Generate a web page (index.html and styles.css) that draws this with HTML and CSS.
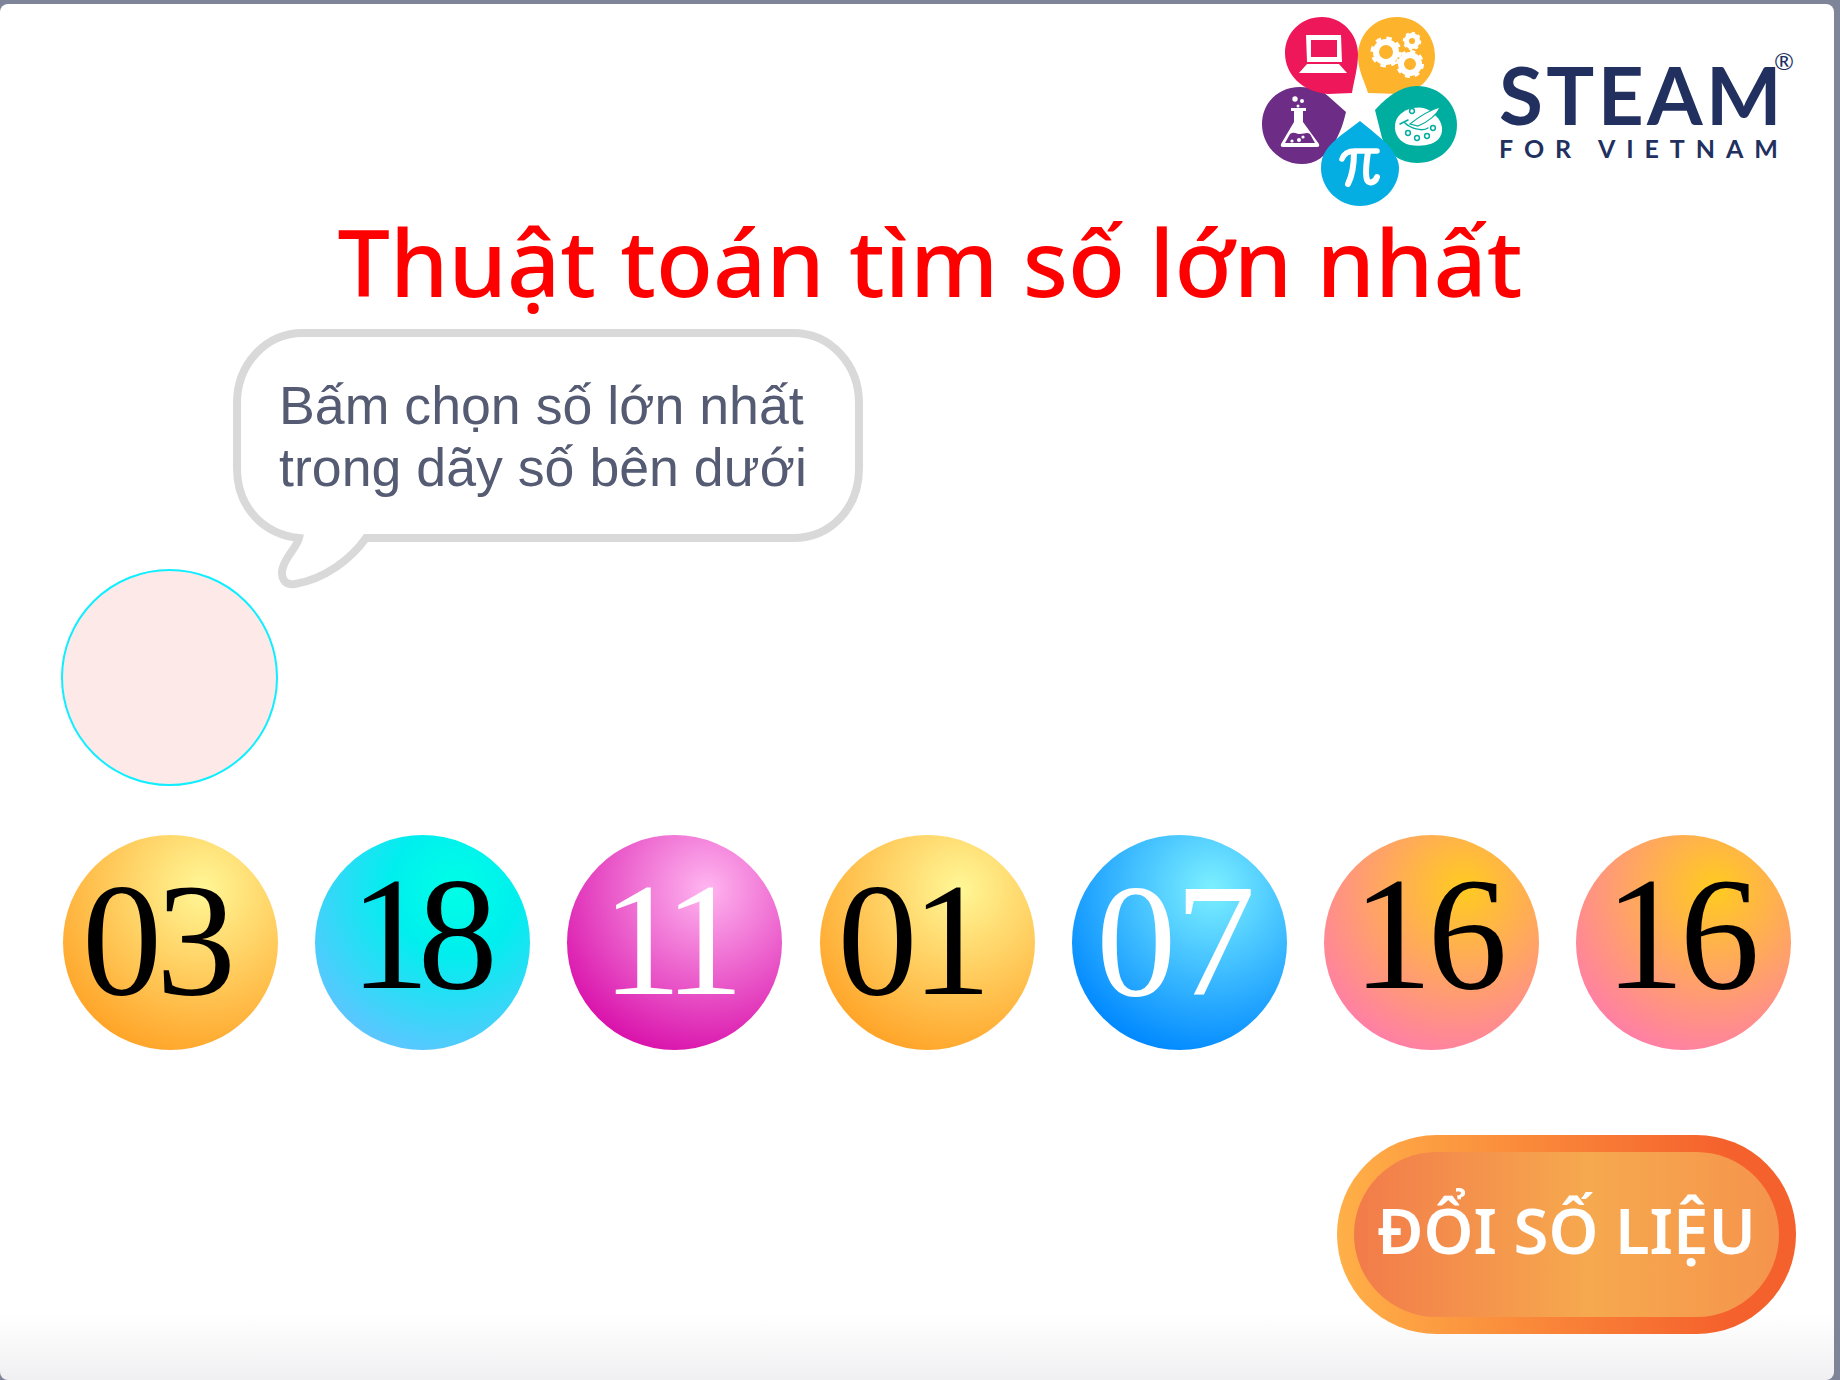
FILE: index.html
```html
<!doctype html>
<html lang="vi">
<head>
    <meta charset="UTF-8">
    <title>Thuật toán tìm số lớn nhất</title>
    <link rel="stylesheet" href="styles.css">
</head>
<body>
<div class="screen">
    <header class="brand">
        <svg class="brand-mark" viewBox="0 0 220 200" width="220" height="200" aria-hidden="true">
            <!-- petals -->
            <path fill="#6d2c85" d="M50 77C62 77 72 80 78 86L96 102C93 115 90 122 86 130C76 147 65 154 52 154C30 154 12 136 12 114C12 93 28 77 50 77Z"/>
            <path fill="#ee1759" d="M72 7C92 7 108 24 108 44C108 58 104 70 102 83L78 84C52 82 35 64 35 43C35 23 51 7 72 7Z"/>
            <path fill="#fdb32b" d="M147 7C168 7 185 24 185 46C185 66 170 82 150 84L118 83C114 70 108 60 108 46C108 24 125 7 147 7Z"/>
            <path fill="#00ae9f" d="M167 76C189 76 207 93 207 115C207 137 189 153 167 153C150 153 138 144 132 128L125 100C136 88 150 76 167 76Z"/>
            <path fill="#04ade2" d="M110 111C118 118 135 130 142 140C147 148 149 152 149 158C149 179 131 196 110 196C89 196 71 179 71 158C71 144 78 136 90 126Z"/>

            <!-- laptop -->
            <path fill="#fff" fill-rule="evenodd" d="M56 25H91L92 52H57ZM61 30V47H87V30Z"/>
            <path fill="#fff" d="M57 54H89L97 63H49Z"/>
            <!-- gears -->
            <g class="gear">
                <circle cx="136" cy="42" r="10" stroke-width="6"/>
                <circle cx="136" cy="42" r="13.5" stroke-width="4" stroke-dasharray="5.3 5.3"/>
                <circle cx="162" cy="31" r="5.5" stroke-width="5"/>
                <circle cx="162" cy="31" r="8" stroke-width="2.5" stroke-dasharray="3.1 3.1"/>
                <circle cx="160" cy="54" r="9" stroke-width="6"/>
                <circle cx="160" cy="54" r="12.5" stroke-width="3" stroke-dasharray="4.9 4.9"/>
            </g>
            <!-- flask -->
            <circle cx="45" cy="89" r="2.7" fill="#fff"/>
            <circle cx="52" cy="91" r="2" fill="#fff"/>
            <circle cx="48" cy="96" r="1.5" fill="#fff"/>
            <path fill="#fff" d="M41 98H56V101H53V112L69 134Q70 137 67 137H33Q30 137 31 134L44 112V101H41Z"/>
            <path fill="#6d2c85" d="M40 124C44 121 47 124 50 124C54 124 57 122 60 124L65 133H35Z"/>
            <circle cx="42" cy="131" r="1.6" fill="#fff"/>
            <circle cx="49" cy="130" r="2" fill="#fff"/>
            <circle cx="53" cy="127" r="1.6" fill="#fff"/>
            <!-- palette -->
            <path fill="#fff" d="M163 98C175 96 180 100 186 106C192 112 194 120 190 127C185 135 172 137 160 135C150 133 144 124 145 115C146 106 153 100 163 98Z"/>
            <path fill="#fff" stroke="#00ae9f" stroke-width="1.2" d="M160 114C170 106 180 100 190 97C188 104 178 112 168 116Z"/>
            <path fill="none" stroke="#00ae9f" stroke-width="1.5" stroke-linecap="round" d="M155 113C160 118 172 122 178 118M150 114L158 110"/>
            <g fill="none" stroke="#00ae9f" stroke-width="1.5">
                <circle cx="162" cy="101" r="2.4"/>
                <circle cx="158" cy="123" r="2.4"/>
                <circle cx="167" cy="128" r="2.4"/>
                <circle cx="177" cy="126" r="2.4"/>
                <circle cx="183" cy="118" r="2.4"/>
            </g>
            <!-- pi -->
            <path fill="none" stroke="#fff" stroke-width="5.5" stroke-linecap="round" d="M92 149C94 143 99 141 105 141H127"/>
            <path fill="none" stroke="#fff" stroke-width="6" stroke-linecap="round" d="M104 142C104 155 102 166 98 174"/>
            <path fill="none" stroke="#fff" stroke-width="6" stroke-linecap="round" d="M118 142C116 155 115 164 117 170C119 174 125 173 127 167"/>
        </svg>
        <div class="brand-name">
            <div class="brand-steam">STEAM<span class="brand-reg">®</span></div>
            <div class="brand-sub">FOR VIETNAM</div>
        </div>
    </header>

    <h1 class="title">Thuật toán tìm số lớn nhất</h1>

    <div class="bubble">
        <svg class="bubble-shape" viewBox="0 0 630 260" width="630" height="260" aria-hidden="true">
            <path fill="#fff" stroke="#d9d9d9" stroke-width="8" d="M70 4H560C598 4 626 36 626 74V139C626 179 598 209 560 209H133C118 230 92 250 62 255C51 257 47 248 50 238C54 226 64 218 66 209C30 205 4 178 4 139V74C4 36 32 4 70 4Z"/>
        </svg>
        <p class="bubble-text">Bấm chọn số lớn nhất<br>trong dãy số bên dưới</p>
    </div>

    <div class="slot"></div>

    <div class="balls">
        <div class="ball ball-yellow num-03">03</div>
        <div class="ball ball-cyan num-18">18</div>
        <div class="ball ball-pink num-11">11</div>
        <div class="ball ball-yellow num-01">01</div>
        <div class="ball ball-blue num-07">07</div>
        <div class="ball ball-coral num-16">16</div>
        <div class="ball ball-coral num-16">16</div>
    </div>

    <button class="change-btn" type="button">ĐỔI SỐ LIỆU</button>
</div>
</body>
</html>
```

FILE: styles.css
```css
* {
    box-sizing: border-box;
}

body {
    margin: 0;
    background-color: #7f8599;
}

.screen {
    height: 1376px;
    width: 1834px;
    margin-top: 4px;
    position: relative;
    display: flex;
    flex-direction: column;
    border-radius: 8px;
    background: linear-gradient(to bottom, #fff 1310px, #f0f0f2 100%);
    overflow: hidden;
}

.brand {
    height: 202px;
    padding: 6px 45px 0 0;
    display: flex;
    justify-content: flex-end;
    gap: 29px;
}

.brand-mark {
    flex: none;
}

.gear circle {
    fill: none;
    stroke: #fff;
}

.brand-name {
    padding-top: 51px;
    width: 290px;
    color: #22305f;
    font-family: Lato, sans-serif;
}

.brand-steam {
    display: flex;
    font-size: 80px;
    line-height: 66px;
    font-weight: 700;
    letter-spacing: 3.4px;
    white-space: nowrap;
}

.brand-reg {
    margin: -13px 0 0 -11px;
    font-size: 24px;
    line-height: 26px;
    font-weight: 400;
    letter-spacing: 0;
}

.brand-sub {
    margin-top: 8px;
    font-size: 25px;
    line-height: 26px;
    font-weight: 700;
    letter-spacing: 10.9px;
    white-space: nowrap;
}

.title {
    margin: 0;
    padding-left: 26px;
    text-align: center;
    color: #ff0000;
    font-family: "Noto Sans", sans-serif;
    font-size: 93.3px;
    line-height: 110px;
    font-weight: 500;
}

.bubble {
    margin: 13px 0 0 233px;
    width: 630px;
    height: 213px;
    position: relative;
}

.bubble-shape {
    position: absolute;
    left: 0;
    top: 0;
}

.bubble-text {
    margin: 0;
    padding: 45px 0 0 46px;
    position: relative;
    color: #555b73;
    font-family: "Liberation Sans", Arial, sans-serif;
    font-size: 53.7px;
    line-height: 62px;
    white-space: nowrap;
}

.slot {
    margin: 27px 0 0 61px;
    width: 217px;
    height: 217px;
    border: 2.5px solid #10eeff;
    border-radius: 50%;
    background-color: #fdeae8;
}

.balls {
    margin-top: 49px;
    padding-left: 63px;
    display: flex;
    gap: 37.2px;
}

.ball {
    width: 215px;
    height: 215px;
    flex: none;
    border-radius: 50%;
    display: flex;
    align-items: center;
    justify-content: center;
    color: #000;
    font-family: "Liberation Serif", "Times New Roman", serif;
    font-size: 160px;
    line-height: 1;
}

/* the digits do not sit quite centred in their balls */
.num-03 {
    padding: 0 29px 6px 0;
    letter-spacing: -6px;
}

.num-18 {
    padding: 0 10px 17px 0;
    letter-spacing: -12px;
}

.num-11 {
    padding: 0 16px 6px 0;
    letter-spacing: -12px;
}

.num-01 {
    padding: 0 31px 6px 0;
    letter-spacing: -6px;
}

.num-07 {
    padding: 0 8px 4px 0;
    letter-spacing: -1px;
}

.num-16 {
    padding: 0 8px 17px 0;
    letter-spacing: -5px;
}

.ball-yellow {
    background: radial-gradient(circle at 65% 25%, #fff796 0, #ffa428 80%);
}

.ball-cyan {
    background: radial-gradient(circle at 65% 25%, #00ffe6 0, #00efee 30%, #5cc6ff 80%);
}

.ball-pink {
    background: radial-gradient(circle at 65% 25%, #ffb5f0 0, #d912ab 80%);
    color: #fff;
}

.ball-blue {
    background: radial-gradient(circle at 65% 25%, #7cf0ff 0, #0088ff 80%);
    color: #fff;
}

.ball-coral {
    background: radial-gradient(circle at 65% 25%, #ffcb20 0, #ff7fa5 80%);
}

.change-btn {
    margin: 85px 38px 0 auto;
    padding: 0 0 10px;
    width: 459px;
    height: 199px;
    border: 17px solid transparent;
    border-radius: 100px;
    background:
        linear-gradient(to right, #f27b4a 0%, #f6a94e 55%, #f5944d 100%) padding-box,
        linear-gradient(to right, #ffb048 0%, #f5612c 85%) border-box;
    color: #fff;
    font-family: "Noto Sans", sans-serif;
    font-size: 63.5px;
    font-weight: 600;
    white-space: nowrap;
}
```
